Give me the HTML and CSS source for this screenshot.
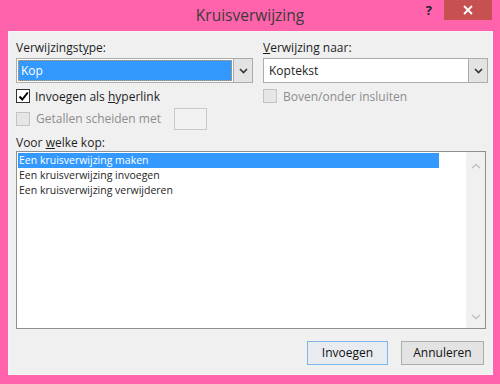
FILE: index.html
```
<!DOCTYPE html>
<html lang="nl">

<head>
    <meta charset="UTF-8">
    <title>Kruisverwijzing</title>
    <link rel="stylesheet" href="styles.css">
</head>

<body>
    <div class="dialog">
        <div class="titlebar">
            <div></div>
            <div class="title">Kruisverwijzing</div>
            <div class="controls">
                <span class="help">?</span>
                <span class="close">
                    <svg width="12" height="10" viewBox="0 0 12 10">
                        <path d="M2 1 L10 9 M10 1 L2 9" stroke="#fff" stroke-width="1.8" fill="none" />
                    </svg>
                </span>
            </div>
        </div>

        <div class="client">
            <div class="top">
                <div class="col">
                    <div class="label">Verwijzingst<u>y</u>pe:</div>
                    <div class="combo">
                        <div class="combo-value selected">Kop</div>
                        <div class="combo-btn">
                            <svg width="9" height="6" viewBox="0 0 9 6">
                                <path d="M1 1 L4.5 4.5 L8 1" stroke="#333" stroke-width="1.6" fill="none" />
                            </svg>
                        </div>
                    </div>
                    <div class="row first">
                        <span class="check checked">
                            <svg width="11" height="11" viewBox="0 0 11 11">
                                <path d="M1.5 5.5 L4.3 8.5 L9.8 1.5" stroke="#000" stroke-width="2" fill="none" />
                            </svg>
                        </span>
                        <span>Invoegen als <u>h</u>yperlink</span>
                    </div>
                    <div class="row second">
                        <span class="check disabled"></span>
                        <span class="muted">Getallen scheiden met</span>
                        <span class="textbox"></span>
                    </div>
                </div>
                <div class="col">
                    <div class="label"><u>V</u>erwijzing naar:</div>
                    <div class="combo">
                        <div class="combo-value">Koptekst</div>
                        <div class="combo-btn">
                            <svg width="9" height="6" viewBox="0 0 9 6">
                                <path d="M1 1 L4.5 4.5 L8 1" stroke="#333" stroke-width="1.6" fill="none" />
                            </svg>
                        </div>
                    </div>
                    <div class="row first">
                        <span class="check disabled"></span>
                        <span class="muted">Boven/onder insluiten</span>
                    </div>
                </div>
            </div>

            <div class="label list-label">Voor <u>w</u>elke kop:</div>
            <div class="listbox">
                <div class="items">
                    <div class="item active">Een kruisverwijzing maken</div>
                    <div class="item">Een kruisverwijzing invoegen</div>
                    <div class="item">Een kruisverwijzing verwijderen</div>
                </div>
                <div class="scrollbar">
                    <svg width="10" height="6" viewBox="0 0 10 6">
                        <path d="M1 5 L5 1.5 L9 5" stroke="#c2c2c2" stroke-width="1.6" fill="none" />
                    </svg>
                    <svg width="10" height="6" viewBox="0 0 10 6">
                        <path d="M1 1 L5 4.5 L9 1" stroke="#c2c2c2" stroke-width="1.6" fill="none" />
                    </svg>
                </div>
            </div>

            <div class="buttons">
                <span class="btn default">Invoegen</span>
                <span class="btn">Annuleren</span>
            </div>
        </div>
    </div>
</body>

</html>
```

FILE: styles.css
```
* {
    margin: 0;
    padding: 0;
    box-sizing: border-box;
}

body {
    width: 500px;
    height: 384px;
    overflow: hidden;
    background: #ff63ab;
    font-family: "Open Sans", "Noto Sans", sans-serif;
    font-size: 12px;
    color: #1e1e1e;
}

.dialog {
    display: flex;
    flex-direction: column;
    height: 384px;
}

.titlebar {
    display: grid;
    grid-template-columns: 1fr auto 1fr;
    height: 31px;
}

.title {
    font-size: 15.5px;
    line-height: 30px;
    color: #3a3a3a;
}

.controls {
    display: flex;
    justify-content: flex-end;
    align-items: flex-start;
    margin-right: 8px;
}

.help {
    font-weight: bold;
    font-size: 13px;
    line-height: 20px;
    color: #222;
    margin-right: 12px;
}

.close {
    display: flex;
    align-items: center;
    justify-content: center;
    width: 48px;
    height: 20px;
    background: #c75050;
}

.client {
    display: flex;
    flex-direction: column;
    height: 344px;
    margin: 0 7px 0 8px;
    padding: 8px 6px 9px 7px;
    background: #f0f0f0;
    border: 1px solid #f7f3f5;
}

.top {
    display: grid;
    grid-template-columns: 237px 225px;
    column-gap: 10px;
}

.label {
    height: 15px;
    line-height: 15px;
}

.combo {
    display: flex;
    height: 25px;
    margin-top: 3px;
    background: #fff;
    border: 1px solid #acacac;
}

.combo-value {
    flex: 1;
    margin: 1px;
    padding-left: 4px;
    line-height: 21px;
}

.combo-value.selected {
    padding-left: 2px;
    color: #fff;
    background: #3399ff;
    border: 1px dotted #e5973b;
    line-height: 19px;
}

.combo-btn {
    display: flex;
    align-items: center;
    justify-content: center;
    width: 19px;
    background: #e3e3e3;
    border-left: 1px solid #acacac;
}

.row {
    display: flex;
    align-items: center;
    gap: 5px;
}

.row.first {
    height: 20px;
    margin-top: 3px;
}

.row.second {
    height: 23px;
    margin-top: 1px;
}

.check {
    display: flex;
    align-items: center;
    justify-content: center;
    width: 14px;
    height: 14px;
    background: #fff;
    border: 1px solid #333;
}

.check.disabled {
    background: #e6e6e6;
    border-color: #c4c4c4;
}

.muted {
    color: #8d8d8d;
    margin-left: 1px;
}

.textbox {
    width: 33px;
    height: 22px;
    margin-left: 8px;
    background: #f2f2f2;
    border: 1px solid #c9c9c9;
}

.list-label {
    margin-top: 5px;
}

.listbox {
    display: flex;
    height: 180px;
    margin-top: 1px;
    background: #fff;
    border: 1px solid #8e8f92;
}

.items {
    flex: 1;
    padding: 1px 0 0 1px;
    font-size: 10.5px;
}

.item {
    width: 421px;
    height: 15px;
    line-height: 15px;
    padding-left: 1px;
    color: #262626;
}

.item.active {
    color: #fff;
    background: #3399ff;
}

.scrollbar {
    display: flex;
    flex-direction: column;
    justify-content: space-between;
    align-items: center;
    width: 19px;
    padding: 11px 0 8px;
    background: #f0f0f0;
}

.buttons {
    display: flex;
    justify-content: flex-end;
    gap: 13px;
    margin-top: 12px;
    padding-right: 2px;
}

.btn {
    height: 24px;
    line-height: 22px;
    text-align: center;
    background: #e3e3e3;
    border: 1px solid #adadad;
    color: #111;
}

.btn.default {
    width: 81px;
    background: #e8ecf0;
    border-color: #7eb4ea;
}

.btn:not(.default) {
    width: 83px;
}
```
